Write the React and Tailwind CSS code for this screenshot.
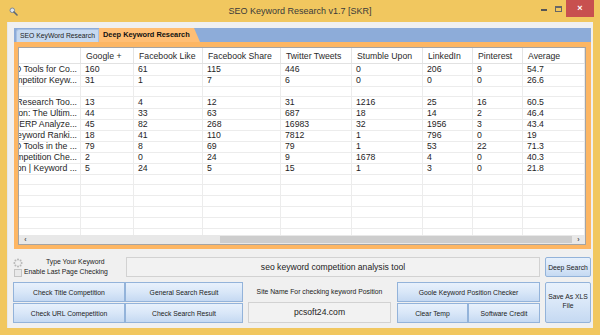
import React from "react";

const heads = ["", "Google +", "Facebook Like", "Facebook Share", "Twitter Tweets", "Stumble Upon", "LinkedIn", "Pinterest", "Average"];

const blank = ["", "", "", "", "", "", "", "", ""];

const rows = [
  ["Best SEO Tools for Co...", "160", "61", "115", "446", "0", "206", "9", "54.7"],
  ["Competitor Keyw...", "31", "1", "7", "6", "0", "0", "0", "26.6"],
  blank,
  ["Keyword Research Too...", "13", "4", "12", "31", "1216", "25", "16", "60.5"],
  ["Optimization: The Ultim...", "44", "33", "63", "687", "18", "14", "2", "46.4"],
  ["Free SERP Analyze...", "45", "82", "268", "16983", "32", "1956", "3", "43.4"],
  ["Keyword Ranki...", "18", "41", "110", "7812", "1", "796", "0", "19"],
  ["Best SEO Tools in the ...", "79", "8", "69", "79", "1", "53", "22", "71.3"],
  ["Keyword Competition Che...", "2", "0", "24", "9", "1678", "4", "0", "40.3"],
  ["Competition | Keyword ...", "5", "24", "5", "15", "1", "3", "0", "21.8"],
  blank, blank, blank, blank, blank, blank, blank,
];

const btn =
  "flex items-center justify-center text-center leading-[9px] text-[6.8px] text-[#1b1b1b] border border-[#93b3da] bg-gradient-to-b from-[#e8f1fc] via-[#d9e7f8] to-[#c5d9f2]";

const box = "flex items-center justify-center bg-[#f2f2f2] border border-[#d2d2d2] text-[8.6px] text-[#222]";

function Spinner() {
  const dots = [0, 45, 90, 135, 180, 225, 270, 315];
  return (
    <svg width="10" height="10" viewBox="0 0 10 10">
      {dots.map((a) => (
        <circle
          key={a}
          cx={5 + 3.6 * Math.cos((a * Math.PI) / 180)}
          cy={5 + 3.6 * Math.sin((a * Math.PI) / 180)}
          r="1"
          fill="#b8b8b8"
        />
      ))}
    </svg>
  );
}

export default function App() {
  return (
    <div className="w-[600px] h-[335px] overflow-hidden bg-[#f1c75f] font-['Liberation_Sans',Arial,sans-serif] text-[#222]">
      {/* title bar */}
      <div className="h-[22px] grid grid-cols-[1fr_auto_1fr] items-start">
        <div className="pl-[9px] pt-[7px]">
          <svg width="9" height="9" viewBox="0 0 9 9">
            <circle cx="3.3" cy="3.3" r="2.3" fill="#dfe6ee" stroke="#7d8a99" strokeWidth="1" />
            <path d="M5 5 L8 8" stroke="#5d6874" strokeWidth="1.6" strokeLinecap="round" />
          </svg>
        </div>
        <div className="pt-[5px] text-[9px] leading-[12px] text-[#3a3a3a]">SEO Keyword Research v1.7 [SKR]</div>
        <div className="flex justify-end items-start pr-[6px]">
          <div className="w-[14px] h-[17px] flex items-center justify-center">
            <div className="w-[6px] h-[1.5px] bg-[#555] mt-[3px]" />
          </div>
          <div className="w-[14px] h-[17px] flex items-center justify-center mr-[1px]">
            <div className="w-[7px] h-[6px] border border-[#666] border-t-2" />
          </div>
          <div className="w-[28px] h-[17px] bg-[#c8504f] flex items-center justify-center text-white text-[9px] font-bold">
            ×
          </div>
        </div>
      </div>

      {/* client */}
      <div className="ml-[7px] w-[586px] h-[306px] bg-[#f0f0f0] border-l border-[#e8e8e8] pt-[6px]">
        {/* tab control */}
        <div className="ml-[6px] w-[577px]">
          <div className="h-[14px] bg-[#8dacd9] flex items-end pl-[2px]">
            <div className="w-[83px] h-[13px] bg-[#c6d9f0] border border-b-0 border-[#a9c1e2] rounded-tl-[3px] flex items-center justify-center text-[6.8px] text-[#222]">
              SEO KeyWord Research
            </div>
            <div className="w-[101px] h-[14px] bg-[#ffbe74] flex items-center pl-[4px] text-[7.4px] font-bold text-[#111] [clip-path:polygon(0_0,calc(100%_-_6px)_0,100%_100%,0_100%)]">
              Deep Keyword Research
            </div>
          </div>
          <div className="h-[207px] bg-[#fdb663] pt-[5px] pl-[4px] pb-[4px]">
            <div className="w-[568px] h-[198px] bg-white border border-[#a4a4a4] flex flex-col">
              <div className="h-[16px] grid grid-cols-[62px_53px_69px_78px_71px_71px_50px_50px_62px] border-b border-[#e2e2e2]">
                {heads.map((h, i) => (
                  <div key={i} className="border-r border-[#e4e4e4] pl-[5px] text-[8.7px] leading-[16px] text-[#2a2a2a] whitespace-nowrap overflow-hidden">
                    {h}
                  </div>
                ))}
              </div>
              <div className="flex-1 overflow-hidden">
                {rows.map((r, ri) => (
                  <div key={ri} className="h-[11px] grid grid-cols-[62px_53px_69px_78px_71px_71px_50px_50px_62px]">
                    {r.map((c, ci) =>
                      ci === 0 ? (
                        <div key={ci} className="border-r border-b border-[#ececec] overflow-hidden flex justify-end pr-[3px] text-[8.7px] leading-[11px] whitespace-nowrap text-[#1e1e1e]">
                          <span className="shrink-0">{c}</span>
                        </div>
                      ) : (
                        <div key={ci} className="border-r border-b border-[#ececec] pl-[4px] text-[8.7px] leading-[11px] whitespace-nowrap text-[#1e1e1e]">
                          {c}
                        </div>
                      )
                    )}
                  </div>
                ))}
              </div>
              <div className="h-[9px] bg-[#e8e8e8] flex items-center">
                <div className="w-[13px] text-[7px] leading-[9px] text-[#555] text-center font-bold">‹</div>
                <div className="w-[188px]" />
                <div className="flex-1 h-[7px] bg-[#cdcdcd]" />
                <div className="w-[13px] text-[7px] leading-[9px] text-[#555] text-center font-bold">›</div>
              </div>
            </div>
          </div>
        </div>

        {/* controls row A */}
        <div className="flex mt-[8px] ml-[5px] h-[20px]">
          <div className="w-[113px] flex flex-col">
            <div className="h-[11px] flex items-center">
              <Spinner />
              <span className="ml-[23px] text-[6.8px] text-[#222]">Type Your Keyword</span>
            </div>
            <div className="h-[9px] flex items-center pl-[1px]">
              <div className="w-[8px] h-[8px] border border-[#c4c4c4] bg-[#e9e9e9]" />
              <span className="ml-[2px] text-[6.8px] text-[#222]">Enable Last Page Checking</span>
            </div>
          </div>
          <div className={`${box} w-[414px]`}>seo keyword competition analysis tool</div>
          <div className={`${btn} ml-[5px] w-[46px] rounded-[2px]`}>Deep Search</div>
        </div>

        {/* controls row B */}
        <div className="flex mt-[5px] ml-[5px] h-[41px]">
          <div className="w-[230px] grid grid-cols-[112px_118px] grid-rows-2 gap-y-[1px]">
            <div className={btn}>Check Title Competition</div>
            <div className={btn}>General Search Result</div>
            <div className={btn}>Check URL Comepetition</div>
            <div className={btn}>Check Search Result</div>
          </div>
          <div className="ml-[5px] w-[143px] flex flex-col">
            <div className="h-[20px] flex items-center justify-center text-[6.8px] text-[#222]">
              Site Name For checking keyword Position
            </div>
            <div className={`${box} h-[21px]`}>pcsoft24.com</div>
          </div>
          <div className="ml-[6px] w-[143px] grid grid-cols-[71px_72px] grid-rows-2 gap-y-[1px]">
            <div className={`${btn} col-span-2`}>Goole Keyword Position Checker</div>
            <div className={btn}>Clear Temp</div>
            <div className={btn}>Software Credit</div>
          </div>
          <div className={`${btn} ml-[5px] w-[46px] rounded-[2px] items-start pt-[9px]`}>
            Save As XLS
            <br />
            File
          </div>
        </div>
      </div>
    </div>
  );
}
